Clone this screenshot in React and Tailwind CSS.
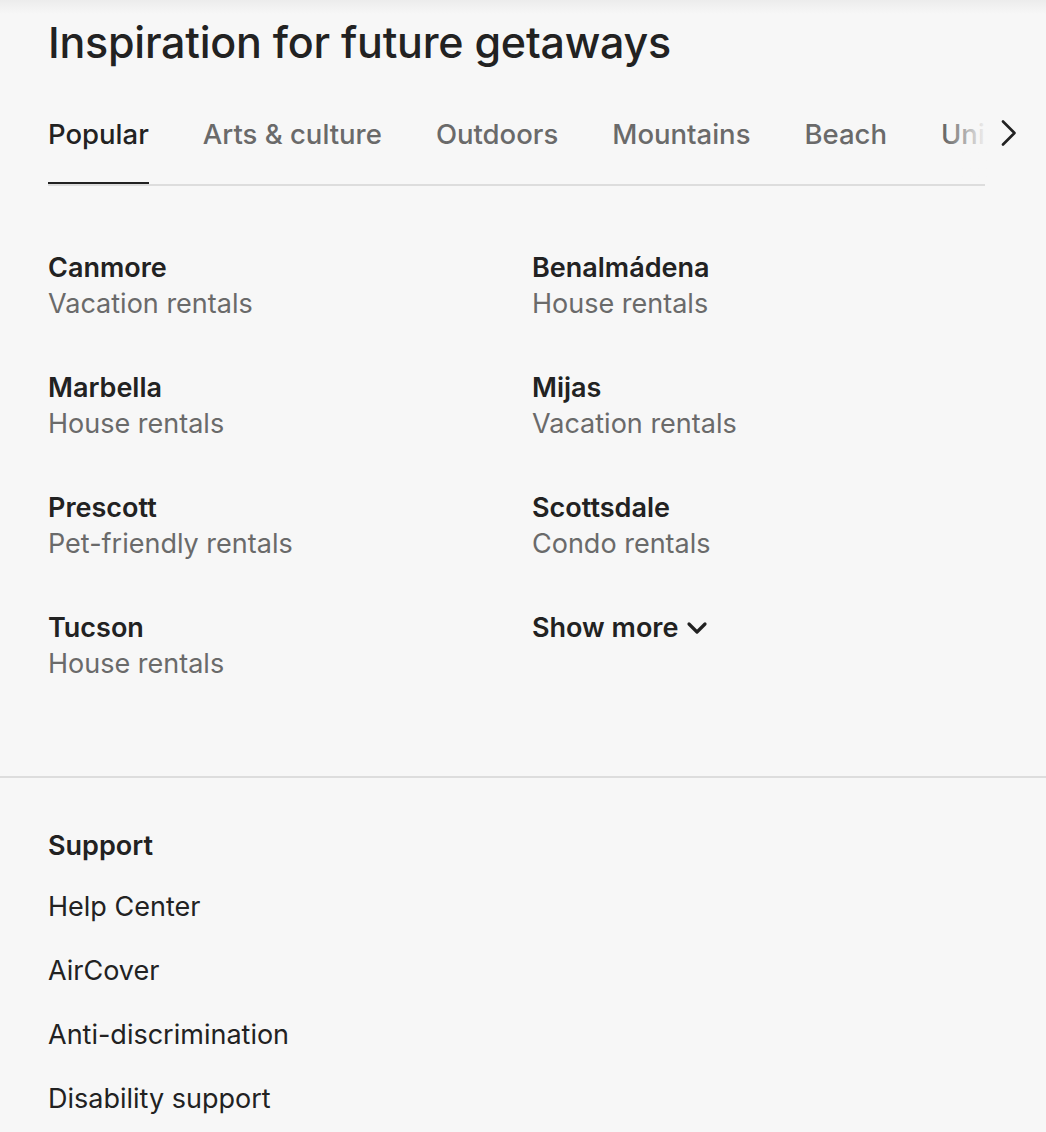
import React from "react";

const tabs = ["Popular", "Arts & culture", "Outdoors", "Mountains", "Beach", "Unique stays"];

const destinos = [
  { ciudad: "Canmore", tipo: "Vacation rentals" },
  { ciudad: "Benalmádena", tipo: "House rentals" },
  { ciudad: "Marbella", tipo: "House rentals" },
  { ciudad: "Mijas", tipo: "Vacation rentals" },
  { ciudad: "Prescott", tipo: "Pet-friendly rentals" },
  { ciudad: "Scottsdale", tipo: "Condo rentals" },
  { ciudad: "Tucson", tipo: "House rentals" },
];

const soporte = ["Help Center", "AirCover", "Anti-discrimination", "Disability support"];

const App = () => {
  return (
    <div
      className="relative min-h-[1132px] bg-[#f7f7f7] text-[#222222] overflow-hidden"
      style={{ fontFamily: "Inter, 'Noto Sans', sans-serif" }}
    >
      <div className="absolute top-0 left-0 right-0 h-[14px] bg-gradient-to-b from-[#ececec] to-[#f7f7f7]" />

      <div className="relative px-12 pt-[14px]">
        <h2 className="text-[43px] leading-[56px] font-medium tracking-[-0.25px]">
          Inspiration for future getaways
        </h2>

        {/* pestañas */}
        <div className="relative mt-[44px]">
          <div className="flex items-center gap-[54px] w-[937px] overflow-hidden whitespace-nowrap border-b-2 border-[#dddddd]">
            {tabs.map((t, i) => (
              <div
                key={t}
                className={`text-[27.5px] leading-[36px] pb-[30px] pt-[2px] border-b-4 -mb-[2px] font-medium ${
                  i === 0
                    ? "border-[#222222] text-[#222222]"
                    : "border-transparent text-[#6a6a6a]"
                }`}
              >
                {t}
              </div>
            ))}
          </div>
          <div className="absolute top-0 left-[897px] w-[42px] h-[70px] bg-gradient-to-r from-transparent to-[#f7f7f7]" />
          <div className="absolute top-[-1px] left-[951px] h-[40px] flex items-center">
            <svg width="20" height="26" viewBox="0 0 20 26" fill="none">
              <path d="M4 1.5 L15.5 13 L4 24.5" stroke="#222222" strokeWidth="2.6" strokeLinecap="round" strokeLinejoin="round" />
            </svg>
          </div>
        </div>

        {/* destinos */}
        <div className="grid grid-cols-2 gap-x-[18px] gap-y-[48px] pt-[64px] pb-[94px]">
          {destinos.map((d) => (
            <div key={d.ciudad} className="leading-[36px] text-[27px]">
              <div className="font-semibold text-[#222222]">{d.ciudad}</div>
              <div className="text-[#6a6a6a]">{d.tipo}</div>
            </div>
          ))}
          <div className="leading-[36px] text-[27px]">
            <button className="flex items-center gap-[8px] font-semibold text-[#222222]">
              Show more
              <svg width="22" height="22" viewBox="0 0 22 22" fill="none">
                <path d="M3 7 L11 15 L19 7" stroke="#222222" strokeWidth="3.2" strokeLinecap="round" strokeLinejoin="round" />
              </svg>
            </button>
          </div>
        </div>
      </div>

      <div className="border-t-2 border-[#dddddd]" />

      <div className="px-12 pt-[50px]">
        <h3 className="text-[27px] leading-[36px] font-semibold">Support</h3>
        <ul className="mt-[25px] flex flex-col gap-[28px]">
          {soporte.map((s) => (
            <li key={s} className="text-[27px] leading-[36px] text-[#222222]">
              {s}
            </li>
          ))}
        </ul>
      </div>
    </div>
  );
};

export default App;
